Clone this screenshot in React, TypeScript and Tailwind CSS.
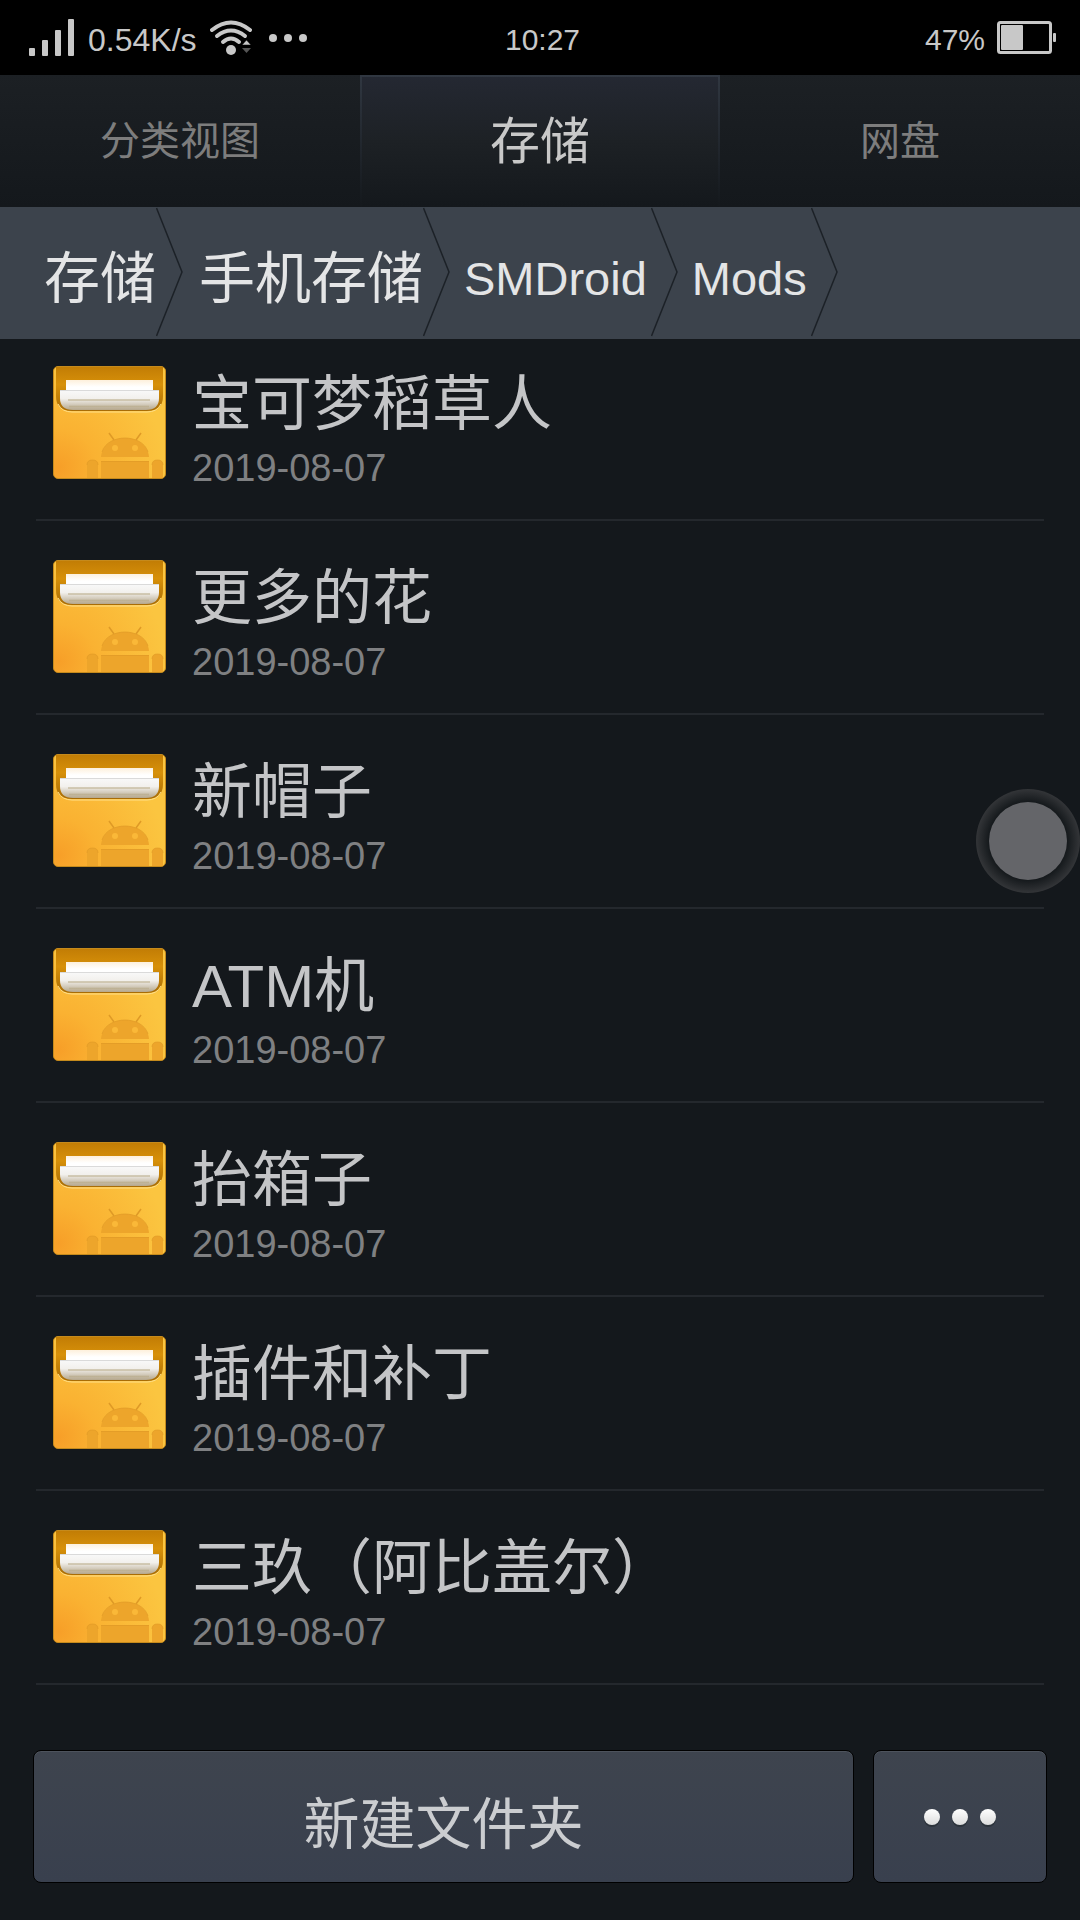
import { useState } from 'react'
import clsx from 'clsx'

interface Folder {
  id: number
  name: string
  date: string
}

const tabs = ['分类视图', '存储', '网盘']

const crumbs = ['存储', '手机存储', 'SMDroid', 'Mods']

const folders: Folder[] = [
  { id: 1, name: '宝可梦稻草人', date: '2019-08-07' },
  { id: 2, name: '更多的花', date: '2019-08-07' },
  { id: 3, name: '新帽子', date: '2019-08-07' },
  { id: 4, name: 'ATM机', date: '2019-08-07' },
  { id: 5, name: '抬箱子', date: '2019-08-07' },
  { id: 6, name: '插件和补丁', date: '2019-08-07' },
  { id: 7, name: '三玖（阿比盖尔）', date: '2019-08-07' },
]

const SignalIcon = () => (
  <svg width="46" height="38" viewBox="0 0 46 38" fill="#c8c8c8" aria-hidden="true">
    <rect x="0" y="29" width="6" height="8" rx="1" />
    <rect x="13" y="21" width="6" height="16" rx="1" />
    <rect x="26" y="11" width="6" height="26" rx="1" />
    <rect x="39" y="0" width="6" height="37" rx="1" />
  </svg>
)

const WifiIcon = () => (
  <svg width="42" height="36" viewBox="0 0 42 36" fill="none" aria-hidden="true">
    <g stroke="#c8c8c8" strokeWidth="4" strokeLinecap="round">
      <path d="M2 10 Q21 -5 40 10" />
      <path d="M7 16 Q21 5 35 16" />
      <path d="M13 22 Q21 15 29 22" />
    </g>
    <circle cx="21" cy="30" r="5" fill="#c8c8c8" />
    <path d="M32 25 L36.500 20 L41 25 Z" fill="#c8c8c8" stroke="#000" strokeWidth="0.500" />
    <path d="M32 28 L36.500 33 L41 28 Z" fill="#555555" />
  </svg>
)

const BatteryIcon = () => (
  <svg width="59" height="34" viewBox="0 0 59 34" aria-hidden="true">
    <rect x="1.500" y="1.500" width="52" height="30" rx="2" fill="none" stroke="#c8c8c8" strokeWidth="3" />
    <rect x="4" y="4" width="22" height="25" rx="1" fill="#c8c8c8" />
    <rect x="56" y="12" width="3" height="9" rx="1" fill="#c8c8c8" />
  </svg>
)

const FolderIcon = () => (
  <svg className="size-[113px] shrink-0" viewBox="0 0 113 113" aria-hidden="true">
    <defs>
      <radialGradient id="body" cx="0.050" cy="0.900" r="0.950">
        <stop offset="0" stopColor="#f79f28" />
        <stop offset="0.350" stopColor="#fab232" />
        <stop offset="1" stopColor="#fbc540" />
      </radialGradient>
      <linearGradient id="pocket" x1="0" y1="0" x2="0" y2="1">
        <stop offset="0" stopColor="#c27d05" />
        <stop offset="0.400" stopColor="#d79009" />
        <stop offset="1" stopColor="#a86c05" />
      </linearGradient>
      <linearGradient id="sheetBack" x1="0" y1="0" x2="0" y2="1">
        <stop offset="0" stopColor="#fdf0dc" />
        <stop offset="0.500" stopColor="#ffffff" />
      </linearGradient>
      <linearGradient id="sheetFront" x1="0" y1="0" x2="0" y2="1">
        <stop offset="0" stopColor="#f8f8f8" />
        <stop offset="0.400" stopColor="#f2f0ec" />
        <stop offset="1" stopColor="#b5a78c" />
      </linearGradient>
    </defs>
    <rect x="0.500" y="0.500" width="112" height="112" rx="4.500" fill="url(#body)" stroke="#c58a1c" />
    <path d="M3 1 H110 V30 Q110 45 94 45 H19 Q3 45 3 30 Z" fill="url(#pocket)" />
    <rect x="13" y="14" width="87" height="14" fill="url(#sheetBack)" />
    <path d="M7 25 H106 V32 Q106 44 93 44 H20 Q7 44 7 32 Z" fill="url(#sheetFront)" />
    <path d="M7 24.500 H106" stroke="#dadada" />
    <path d="M15 34 H97 M16 40.500 H96" stroke="#b9ad8c" strokeOpacity="0.700" strokeWidth="1.500" />
    <path d="M5 38 Q9 46 19 46 H94 Q104 46 108 38" fill="none" stroke="#ffe08a" />
    <g fill="#eda52b">
      <path d="M48 91 C49 79 60 72 72 72 C84 72 95 79 96 91 Z" />
      <path d="M48 95 H96 V112 H48 Z" />
      <path d="M34 112 V99 Q34 94 39.500 94 Q45 94 45 99 V112 Z" />
      <path d="M99 112 V99 Q99 94 104.500 94 Q110 94 110 99 V112 Z" />
    </g>
    <g fill="none" stroke="#df9a26">
      <path d="M56 67 L61 74 M88 67 L83 74" strokeWidth="1.500" />
      <path d="M49 86 C52 76 63 72 72 72 C81 72 92 76 95 86 M48 95.500 H96" strokeOpacity="0.700" />
      <path d="M34 99 Q34 94 39.500 94 Q45 94 45 99 M99 99 Q99 94 104.500 94 Q110 94 110 99" strokeOpacity="0.700" />
    </g>
    <circle cx="62" cy="82" r="3" fill="#fab838" />
    <circle cx="82" cy="82" r="3" fill="#fab838" />
  </svg>
)

const CrumbArrow = () => (
  <svg className="w-[27px] h-[132px] shrink-0" viewBox="0 0 27 132" fill="none" aria-hidden="true">
    <path d="M0.500 1 L26 65 L0.500 129" stroke="#1c2127" strokeWidth="1.500" />
  </svg>
)

const StatusBar = () => (
  <header className="grid grid-cols-3 items-center h-[75px] pl-[29px] pr-6 bg-black text-[30px] leading-10 text-[#c8c8c8]">
    <div className="flex items-center gap-[13px]">
      <SignalIcon />
      <span className="pt-1 text-[32px]">0.54K/s</span>
      <WifiIcon />
      <div className="flex gap-[7px] ml-1">
        <span className="size-2 rounded-full bg-[#c8c8c8]" />
        <span className="size-2 rounded-full bg-[#c8c8c8]" />
        <span className="size-2 rounded-full bg-[#c8c8c8]" />
      </div>
    </div>
    <time className="pt-1 text-center">10:27</time>
    <div className="flex items-center justify-end gap-3">
      <span className="pt-1">47%</span>
      <BatteryIcon />
    </div>
  </header>
)

export default function App() {
  const [activeTab, setActiveTab] = useState('存储')

  return (
    <div className="flex flex-col min-h-screen bg-[#14181c] font-['Liberation_Sans','Noto_Sans_CJK_SC',sans-serif]">
      <StatusBar />

      {/* Tabs */}
      <nav className="grid grid-cols-3 h-[132px] bg-linear-to-b from-[#1c2024] to-[#14181c]">
        {tabs.map((tab) => (
          <button
            key={tab}
            type="button"
            onClick={() => setActiveTab(tab)}
            className={clsx(
              tab === activeTab
                ? 'border-x-2 border-t-2 [border-image:linear-gradient(#303741,#14181c)_2] bg-linear-to-b from-[#242832] via-[#1d2125] to-[#14181c] text-[50px] text-[#c8c8c8]'
                : 'text-[40px] text-[#7d7d7d]'
            )}
          >
            {tab}
          </button>
        ))}
      </nav>

      {/* Breadcrumb */}
      <nav className="h-[132px] bg-[#3c434c] pl-7">
        <ol className="flex items-center">
          {crumbs.map((crumb) => (
            <li key={crumb} className="flex items-center">
              <a
                href="#"
                className={clsx(
                  'pt-3 text-[#e4e5e6]',
                  /^\w/.test(crumb) ? 'pl-3.5 pr-1 text-[47px]' : 'pl-4 text-[56px]'
                )}
              >
                {crumb}
              </a>
              <CrumbArrow />
            </li>
          ))}
        </ol>
      </nav>

      {/* Folder list, scrolled slightly under the breadcrumb */}
      <main className="-mt-3">
        <ul className="px-9">
          {folders.map((folder) => (
            <li key={folder.id} className="h-[194px] border-b-2 border-[#24282d]">
              <button type="button" className="flex w-full pt-[39px] pl-[17px] gap-[26px] text-left">
                <FolderIcon />
                <span className="flex flex-col pt-1">
                  <span className="text-[60px] leading-[70px] text-[#c4c5c7]">{folder.name}</span>
                  <span className="text-[38px] leading-[56px] text-[#7f8082]">{folder.date}</span>
                </span>
              </button>
            </li>
          ))}
        </ul>
      </main>

      {/* Bottom actions */}
      <footer className="flex gap-[19px] mt-auto px-[33px] pb-[37px]">
        <button
          type="button"
          className="flex-1 h-[133px] pt-4 rounded-lg border border-black bg-linear-to-b from-[#3e444e] to-[#39404e] text-[56px] text-[#cbcdd0] shadow-[inset_0_1px_#4d535c]"
        >
          新建文件夹
        </button>
        <button
          type="button"
          aria-label="更多"
          className="flex items-center justify-center gap-3 w-[174px] h-[133px] rounded-lg border border-black bg-linear-to-b from-[#3e444e] to-[#39404e] shadow-[inset_0_1px_#4d535c]"
        >
          <span className="size-4 rounded-full bg-linear-to-b from-white to-[#dcdcdc] shadow-[0_2px_#2c333b]" />
          <span className="size-4 rounded-full bg-linear-to-b from-white to-[#dcdcdc] shadow-[0_2px_#2c333b]" />
          <span className="size-4 rounded-full bg-linear-to-b from-white to-[#dcdcdc] shadow-[0_2px_#2c333b]" />
        </button>
      </footer>

      {/* Assistive touch */}
      <button
        type="button"
        aria-label="悬浮球"
        className="fixed right-0 top-[789px] flex items-center justify-center size-[104px] rounded-full bg-radial-[closest-side] from-[#15191c] from-75% to-[#333538]"
      >
        <span className="size-[78px] rounded-full bg-[#646569]" />
      </button>
    </div>
  )
}
